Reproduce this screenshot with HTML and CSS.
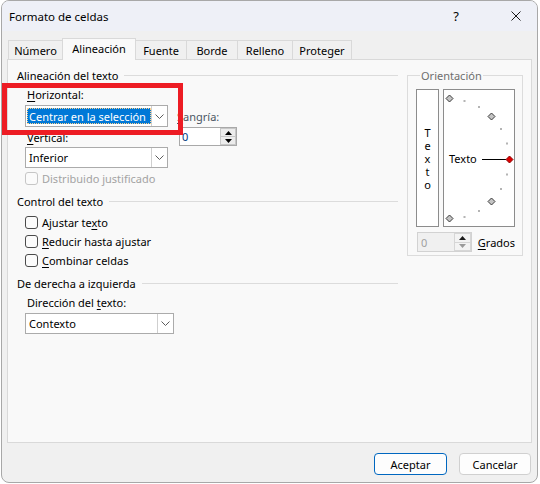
FILE: index.html
```html
<!DOCTYPE html>
<html lang="es">
<head>
<meta charset="utf-8">
<title>Formato de celdas</title>
<link rel="stylesheet" href="styles.css">
</head>
<body>
<div class="window">
  <div class="titlebar">
    <span class="title">Formato de celdas</span>
    <span class="help">?</span>
    <svg class="close" width="10" height="10" viewBox="0 0 10 10"><path d="M0.5 0.5 L9.5 9.5 M9.5 0.5 L0.5 9.5" stroke="#1a1a1a" stroke-width="1" fill="none"/></svg>
  </div>
  <div class="content">
    <div class="tabs">
      <div class="tab tab-numero">Número</div>
      <div class="tab tab-alineacion active">Alineación</div>
      <div class="tab tab-fuente">Fuente</div>
      <div class="tab tab-borde">Borde</div>
      <div class="tab tab-relleno">Relleno</div>
      <div class="tab tab-proteger">Proteger</div>
    </div>
    <div class="panel">
      <div class="leftcol">
        <div class="heading"><span>Alineación del texto</span><i class="rule"></i></div>
        <div class="align">
          <div class="col1">
            <div class="label"><u>H</u>orizontal:</div>
            <div class="combo combo-h">
              <span class="value sel">Centrar en la selección</span>
              <span class="arrow"><svg width="9" height="5" viewBox="0 0 9 5"><path d="M0.5 0.5 L4.5 4.5 L8.5 0.5" fill="none" stroke="#5c5c5c" stroke-width="1"/></svg></span>
            </div>
            <div class="label label-v"><u>V</u>ertical:</div>
            <div class="combo combo-v">
              <span class="value">Inferior</span>
              <span class="arrow"><svg width="9" height="5" viewBox="0 0 9 5"><path d="M0.5 0.5 L4.5 4.5 L8.5 0.5" fill="none" stroke="#5c5c5c" stroke-width="1"/></svg></span>
            </div>
          </div>
          <div class="col2">
            <div class="label label-s"><u>S</u>angría:</div>
            <div class="spin">
              <span class="spin-value">0</span>
              <span class="spin-btns">
                <span class="spin-btn"><svg width="7" height="4" viewBox="0 0 7 4"><path d="M0 4 L3.5 0 L7 4 Z" fill="#000"/></svg></span>
                <span class="spin-btn"><svg width="7" height="4" viewBox="0 0 7 4"><path d="M0 0 L7 0 L3.5 4 Z" fill="#000"/></svg></span>
              </span>
            </div>
          </div>
        </div>
        <div class="check check-disabled"><span class="box"></span><span>Distribuido justificado</span></div>

        <div class="heading heading-control"><span>Control del texto</span><i class="rule"></i></div>
        <div class="checks">
          <div class="check"><span class="box"></span><span>Ajustar te<u>x</u>to</span></div>
          <div class="check"><span class="box"></span><span><u>R</u>educir hasta ajustar</span></div>
          <div class="check"><span class="box"></span><span><u>C</u>ombinar celdas</span></div>
        </div>

        <div class="heading heading-rtl"><span>De derecha a izquierda</span><i class="rule"></i></div>
        <div class="direction">
          <div class="label">Dirección del <u>t</u>exto:</div>
          <div class="combo combo-d">
            <span class="value">Contexto</span>
            <span class="arrow"><svg width="9" height="5" viewBox="0 0 9 5"><path d="M0.5 0.5 L4.5 4.5 L8.5 0.5" fill="none" stroke="#5c5c5c" stroke-width="1"/></svg></span>
          </div>
        </div>
      </div>

      <fieldset class="orient">
        <legend>Orientación</legend>
        <div class="orient-boxes">
          <div class="vtext"><span class="vword">Texto</span></div>
          <div class="dial">
            <svg width="70" height="136" viewBox="0 0 70 136">
              <g fill="#b4b4b4">
                <rect x="19.5" y="10" width="2" height="2"/>
                <rect x="34" y="16" width="2" height="2"/>
                <rect x="56" y="38" width="2" height="2"/>
                <rect x="62" y="52.5" width="2" height="2"/>
                <rect x="62" y="83.5" width="2" height="2"/>
                <rect x="56" y="98" width="2" height="2"/>
                <rect x="34" y="120" width="2" height="2"/>
                <rect x="19.5" y="126" width="2" height="2"/>
              </g>
              <g fill="#c4c4c4" stroke="#3a3a3a" stroke-width="1">
                <path d="M5.5 5 L9 8.5 L5.5 12 L2 8.5 Z"/>
                <path d="M47.5 23 L51 26.5 L47.5 30 L44 26.5 Z"/>
                <path d="M47.5 108 L51 111.5 L47.5 115 L44 111.5 Z"/>
                <path d="M5.5 125 L9 128.5 L5.5 132 L2 128.5 Z"/>
              </g>
              <text x="5" y="73" font-family="Noto Sans, sans-serif" font-size="11" fill="#000">Texto</text>
              <path d="M38 69.5 L62 69.5" stroke="#000" stroke-width="1"/>
              <path d="M65.5 66 L69 69.5 L65.5 73 L62 69.5 Z" fill="#e00000" stroke="#8a0000" stroke-width="1"/>
            </svg>
          </div>
        </div>
        <div class="degrees">
          <div class="spin spin-disabled">
            <span class="spin-value">0</span>
            <span class="spin-btns">
              <span class="spin-btn"><svg width="7" height="4" viewBox="0 0 7 4"><path d="M0 4 L3.5 0 L7 4 Z" fill="#1a1a1a"/></svg></span>
              <span class="spin-btn"><svg width="7" height="4" viewBox="0 0 7 4"><path d="M0 0 L7 0 L3.5 4 Z" fill="#9a9a9a"/></svg></span>
            </span>
          </div>
          <span class="grados"><u>G</u>rados</span>
        </div>
      </fieldset>
    </div>
    <div class="buttons">
      <div class="btn btn-primary">Aceptar</div>
      <div class="btn">Cancelar</div>
    </div>
  </div>
  <div class="annotation"></div>
</div>
</body>
</html>
```
FILE: styles.css
```css
* { box-sizing: border-box; }
html, body { margin: 0; padding: 0; }
body {
  width: 540px;
  height: 484px;
  overflow: hidden;
  background: #ffffff;
  font-family: "Noto Sans", "Segoe UI", sans-serif;
  font-size: 11px;
  color: #000;
}
u { text-decoration-thickness: 1px; text-underline-offset: 2px; }

.window {
  position: relative;
  margin-left: 1px;
  width: 537px;
  height: 483px;
  border: 1px solid #a8a8a8;
  border-radius: 8px;
  background: #f0f0f0;
  overflow: hidden;
  display: flex;
  flex-direction: column;
}

.titlebar {
  flex: none;
  height: 30px;
  background: #eef0f7;
  display: flex;
  align-items: center;
  padding-left: 7px;
}
.title { flex: 1; font-size: 11.5px; }
.help { width: 14px; text-align: center; margin-right: 48px; font-size: 13px; }
.close { margin-right: 16px; }

.content { flex: 1; padding: 0 5px; display: flex; flex-direction: column; }

.tabs {
  margin-top: 7px;
  margin-left: 1px;
  height: 21px;
  display: flex;
  align-items: flex-end;
  position: relative;
  z-index: 2;
}
.tab {
  height: 19px;
  padding-top: 1px;
  border: 1px solid #d9d9d9;
  border-bottom: none;
  background: #f0f0f0;
  display: flex;
  align-items: center;
  justify-content: center;
  margin-left: -1px;
}
.tab:first-child { margin-left: 0; }
.tab.active {
  position: relative;
  z-index: 3;
  height: 22px;
  margin-bottom: -1px;
  padding-top: 0;
  padding-bottom: 2px;
  background: #f9f9f9;
}
.tab-numero { width: 55px; }
.tab-alineacion { width: 74px; }
.tab-fuente { width: 52px; }
.tab-borde { width: 52px; }
.tab-relleno { width: 56px; }
.tab-proteger { width: 60px; }

.panel {
  width: 525px;
  height: 384px;
  border: 1px solid #d9d9d9;
  background: #f9f9f9;
  padding: 8px 7px 0 9px;
  display: grid;
  grid-template-columns: 381px 116px;
  column-gap: 9px;
  align-items: start;
}

.heading {
  height: 15px;
  line-height: 15px;
  display: flex;
  align-items: center;
  white-space: nowrap;
}
.rule { flex: 1; height: 1px; background: #dcdcdc; margin-left: 6px; }
.heading-control { margin-top: 9px; }
.heading-rtl { margin-top: 6px; }

.label { height: 14px; line-height: 14px; padding-left: 2px; white-space: nowrap; }

.align { margin-top: 5px; padding-left: 8px; display: flex; }
.col1 { width: 143px; }
.col1 .label:first-child { margin-bottom: 3px; }
.label-v { margin-top: 4px; margin-bottom: 2px; }
.col2 { margin-left: 11px; width: 58px; padding-top: 22px; }
.label-s { margin-left: -2px; margin-bottom: 3px; padding-left: 0; color: #4a5563; }

.combo {
  height: 22px;
  border: 1px solid #ababab;
  background: #ffffff;
  display: flex;
  align-items: stretch;
}
.combo-v { height: 21px; }
.combo-d { height: 21px; width: 149px; }
.value {
  flex: 1;
  padding-left: 3px;
  display: flex;
  align-items: center;
  white-space: nowrap;
  overflow: hidden;
}
.value.sel {
  margin: 2px 0 2px 1px;
  padding-left: 2px;
  background: #0078d7;
  color: #ffffff;
  outline: 1px dotted #ffd28a;
  outline-offset: -1px;
}
.arrow {
  width: 16px;
  flex: none;
  border-left: 1px solid #cfcfcf;
  display: flex;
  align-items: center;
  justify-content: center;
}

.spin {
  height: 19px;
  border: 1px solid #a9a9a9;
  background: #ffffff;
  display: flex;
}
.spin-value { flex: 1; padding-left: 2px; display: flex; align-items: center; color: #003c80; }
.spin-btns { width: 16px; flex: none; display: flex; flex-direction: column; }
.spin-btn {
  flex: 1;
  background: #ececec;
  border: 1px solid #c8c8c8;
  display: flex;
  align-items: center;
  justify-content: center;
}
.spin-btn + .spin-btn { border-top: none; }

.check {
  height: 19px;
  padding-left: 8px;
  display: flex;
  align-items: center;
  gap: 4px;
  white-space: nowrap;
}
.box {
  width: 13px;
  height: 13px;
  border: 1px solid #4a4a4a;
  border-radius: 3px;
  background: #fbfbfb;
  flex: none;
}
.check-disabled { height: 13px; margin-top: 4px; color: #a3a3a3; }
.check-disabled .box { border-color: #c6c6c6; }
.checks { margin-top: 4px; }

.direction { margin-top: 5px; padding-left: 8px; }
.direction .label { margin-bottom: 3px; }

.orient {
  margin: 0;
  padding: 0 7px 2px 8px;
  min-width: 0;
  border: 1px solid #dcdcdc;
  height: 188px;
}
.orient legend {
  padding: 0 1px;
  margin-left: 4px;
  line-height: 15px;
  color: #6e6e6e;
}
.orient-boxes { margin-top: 6px; display: flex; gap: 4px; height: 138px; }
.vtext {
  width: 23px;
  border: 1px solid #8c8c8c;
  background: #ffffff;
  display: flex;
  align-items: center;
  justify-content: center;
}
.vword {
  writing-mode: vertical-lr;
  text-orientation: upright;
  line-height: 13px;
  letter-spacing: -2px;
  padding-bottom: 2px;
}
.dial {
  width: 72px;
  border: 1px solid #8c8c8c;
  background: #ffffff;
}
.dial svg { display: block; }

.degrees { margin-top: 5px; display: flex; align-items: center; gap: 6px; }
.spin-disabled { margin-left: 1px; width: 56px; height: 20px; border-color: #d2d2d2; background: #f0f0f0; }
.spin-disabled .spin-value { color: #a0a0a0; padding-left: 3px; }
.spin-disabled .spin-btns { width: 17px; }
.spin-disabled .spin-btn { background: #f3f3f3; border-color: #d6d6d6; }

.buttons {
  margin-top: 10px;
  display: flex;
  justify-content: flex-end;
  gap: 12px;
  padding-right: 1px;
}
.btn {
  width: 72px;
  height: 22px;
  border: 1px solid #d0d0d0;
  border-radius: 4px;
  background: #fdfdfd;
  display: flex;
  align-items: center;
  justify-content: center;
}
.btn-primary { width: 73px; border-color: #0067c0; }

.annotation {
  position: absolute;
  left: 0;
  top: 82px;
  width: 181px;
  height: 52px;
  border: 5px solid #ed1c24;
}
```
